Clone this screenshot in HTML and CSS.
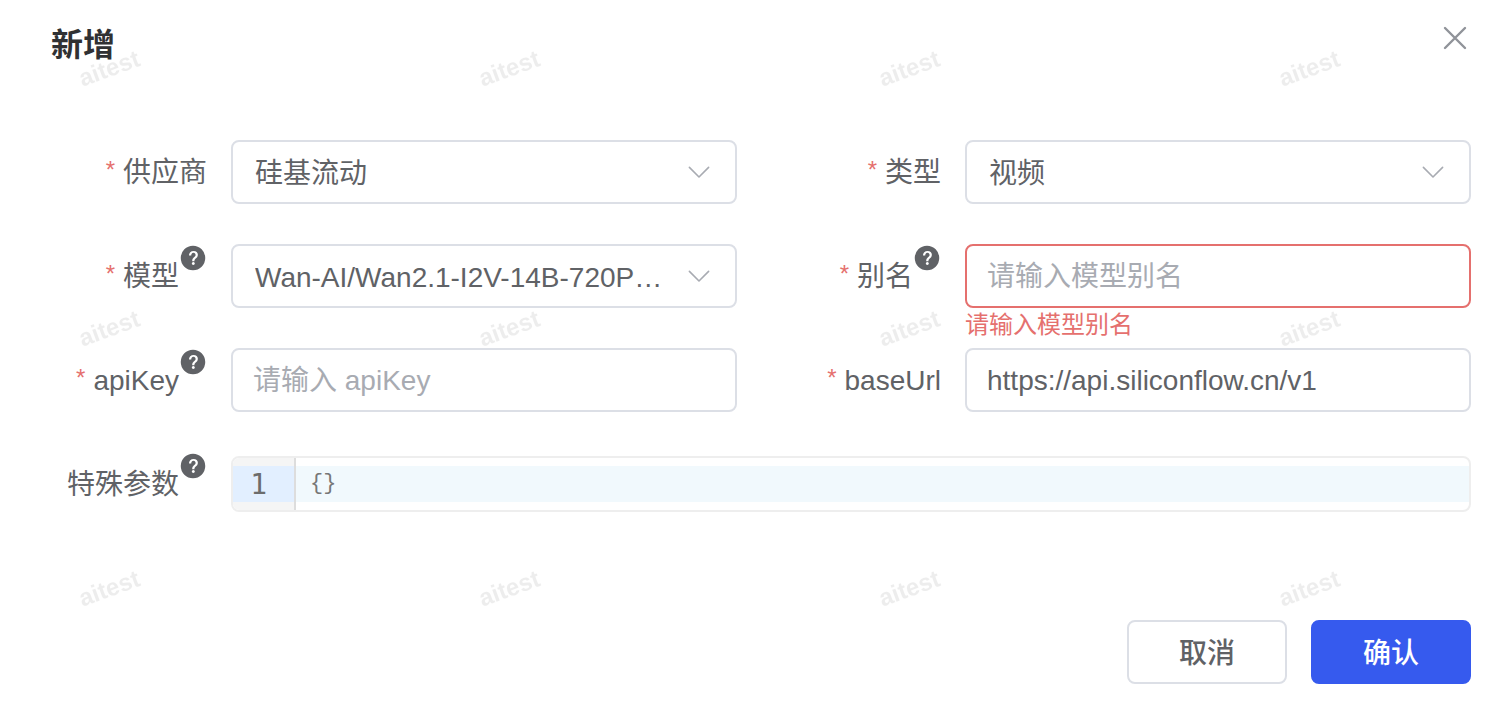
FILE: index.html
```html
<!DOCTYPE html>
<html lang="zh-CN">
<head>
    <meta charset="UTF-8">
    <meta name="viewport" content="width=device-width, initial-scale=1.0">
    <title>新增</title>
    <link rel="stylesheet" href="styles.css">
</head>
<body>
    <!-- shared icons -->
    <svg class="sprite" width="0" height="0" aria-hidden="true">
        <symbol id="icon-help" viewBox="0 0 1024 1024">
            <path fill="currentColor" d="M512 64a448 448 0 1 1 0 896 448 448 0 0 1 0-896m23.744 191.488c-52.096 0-92.928 14.784-123.2 44.352-30.976 29.568-45.76 70.4-45.76 122.496h80.256c0-29.568 5.632-52.8 17.6-68.992 13.376-19.712 35.2-28.864 66.176-28.864 23.936 0 42.944 6.336 56.32 19.712 12.672 13.376 19.712 31.68 19.712 54.912 0 17.6-6.336 34.496-19.008 49.984l-8.448 9.856c-45.76 40.832-73.216 70.4-82.368 89.408-9.856 19.008-14.08 42.24-14.08 68.992v9.856h80.96v-9.856c0-16.896 3.52-31.68 10.56-45.76 6.336-12.672 15.488-24.64 28.16-35.2 33.792-29.568 54.208-48.576 60.544-55.616 16.896-22.528 26.048-51.392 26.048-86.592q0-64.416-42.24-101.376c-28.16-25.344-65.472-37.312-111.232-37.312m-12.672 406.208a54.27 54.27 0 0 0-38.72 14.784 49.4 49.4 0 0 0-15.488 38.016c0 15.488 4.928 28.16 15.488 38.016A54.85 54.85 0 0 0 523.072 768c15.488 0 28.16-4.928 38.72-14.784a51.52 51.52 0 0 0 16.192-38.72 51.97 51.97 0 0 0-15.488-38.016 55.94 55.94 0 0 0-39.424-14.784"/>
        </symbol>
        <symbol id="icon-arrow" viewBox="0 0 28 28">
            <path fill="none" stroke="currentColor" stroke-width="1.6" stroke-linecap="round" stroke-linejoin="round" d="M4.4 9.4 14 19l9.6-9.6"/>
        </symbol>
    </svg>

    <div class="dialog">
        <header class="dialog-header">
            <h1 class="dialog-title">新增</h1>
            <button type="button" class="close-btn" aria-label="关闭">
                <svg width="32" height="32" viewBox="0 0 32 32" fill="none" stroke="currentColor" stroke-width="2.4" stroke-linecap="round">
                    <path d="M6 6l20 20M26 6L6 26"/>
                </svg>
            </button>
        </header>

        <form class="form" id="modelForm">
            <div class="form-item">
                <label class="form-label required" for="provider">供应商</label>
                <div class="form-content">
                    <div class="select-box">
                        <select class="control" id="provider">
                            <option>硅基流动</option>
                        </select>
                        <svg class="arrow"><use href="#icon-arrow"/></svg>
                    </div>
                </div>
            </div>
            <div class="form-item">
                <label class="form-label required" for="type">类型</label>
                <div class="form-content">
                    <div class="select-box">
                        <select class="control" id="type">
                            <option>视频</option>
                        </select>
                        <svg class="arrow"><use href="#icon-arrow"/></svg>
                    </div>
                </div>
            </div>

            <div class="form-item">
                <label class="form-label required" for="model">模型<svg class="help"><use href="#icon-help"/></svg></label>
                <div class="form-content">
                    <div class="select-box">
                        <select class="control" id="model">
                            <option>Wan-AI/Wan2.1-I2V-14B-720P-Turbo</option>
                        </select>
                        <svg class="arrow"><use href="#icon-arrow"/></svg>
                    </div>
                </div>
            </div>
            <div class="form-item">
                <label class="form-label required" for="alias">别名<svg class="help"><use href="#icon-help"/></svg></label>
                <div class="form-content">
                    <input class="control is-error" type="text" id="alias" placeholder="请输入模型别名" aria-describedby="aliasError">
                    <div class="error" id="aliasError">请输入模型别名</div>
                </div>
            </div>

            <div class="form-item">
                <label class="form-label required" for="apiKey">apiKey<svg class="help"><use href="#icon-help"/></svg></label>
                <div class="form-content">
                    <input class="control" type="text" id="apiKey" placeholder="请输入 apiKey">
                </div>
            </div>
            <div class="form-item">
                <label class="form-label required" for="baseUrl">baseUrl</label>
                <div class="form-content">
                    <input class="control" type="text" id="baseUrl" value="https://api.siliconflow.cn/v1">
                </div>
            </div>

            <div class="form-item full">
                <label class="form-label" for="params">特殊参数<svg class="help"><use href="#icon-help"/></svg></label>
                <div class="form-content">
                    <div class="editor">
                        <div class="gutter"><span class="line-number">1</span></div>
                        <textarea class="code" id="params" rows="1" spellcheck="false">{}</textarea>
                    </div>
                </div>
            </div>
        </form>

        <footer class="dialog-footer">
            <button type="button" class="btn">取消</button>
            <button type="submit" form="modelForm" class="btn btn-primary">确认</button>
        </footer>
    </div>

    <svg class="watermark" aria-hidden="true">
        <defs>
            <pattern id="mark" width="400" height="260" patternUnits="userSpaceOnUse">
                <text class="mark-text" transform="translate(112 76) rotate(-20)" text-anchor="middle">aitest</text>
            </pattern>
        </defs>
        <rect width="100%" height="100%" fill="url(#mark)"/>
    </svg>
</body>
</html>
```

FILE: styles.css
```css
* {
    box-sizing: border-box;
}
body {
    margin: 0;
    background: #fff;
    color: #606266;
    font-family: "Liberation Sans", "Noto Sans CJK SC", sans-serif;
    font-size: 28px;
}
input, select, button {
    font: inherit;
    color: inherit;
}
.sprite {
    display: none;
}
.dialog {
    padding: 20px 41px 38px 27px;
}
.dialog-header {
    display: flex;
    justify-content: space-between;
    align-items: flex-start;
    height: 120px;
    padding-left: 24px;
}
.dialog-title {
    margin: 0;
    color: #303133;
    font-size: 32px;
    font-weight: bold;
    line-height: 50px;
}
.close-btn {
    display: flex;
    padding: 2px 0;
    border: none;
    background: none;
    color: #909399;
    cursor: pointer;
}

/* form */
.form {
    display: grid;
    grid-template-columns: 1fr 1fr;
    column-gap: 24px;
}
.form-item {
    display: flex;
    gap: 24px;
    min-height: 104px;
}
.full {
    grid-column: 1 / -1;
}
.form-label {
    display: flex;
    justify-content: flex-end;
    flex: 0 0 180px;
    height: 64px;
    line-height: 66px;
    white-space: nowrap;
}
.required::before {
    content: "*";
    margin-right: 8px;
    color: #e5706e;
    font-size: 24px;
    line-height: 60px;
}
.help {
    width: 28px;
    height: 28px;
}
.form-content {
    flex: 1;
    min-width: 0;
}
.control {
    display: block;
    width: 100%;
    height: 64px;
    padding: 2px 20px 0;
    border: 2px solid #dcdfe6;
    border-radius: 8px;
    background: #fff;
    outline: none;
}
.control:focus {
    border-color: #365aee;
}
.control::placeholder {
    color: #a8abb2;
    opacity: 1;
}
.control.is-error {
    border-color: #e5706e;
}
.error {
    color: #e5706e;
    font-size: 24px;
    line-height: 34px;
}
.select-box {
    display: grid;
    align-items: center;
}
.select-box > * {
    grid-area: 1 / 1;
}
.select-box .control {
    padding: 2px 64px 0 22px;
    appearance: none;
    overflow: hidden;
    text-overflow: ellipsis;
    white-space: nowrap;
}
.arrow {
    justify-self: end;
    width: 28px;
    height: 28px;
    margin-right: 24px;
    color: #a8abb2;
    pointer-events: none;
}

/* code editor */
.editor {
    display: flex;
    margin-top: 4px;
    border: 2px solid #eee;
    border-radius: 8px;
    overflow: hidden;
}
.gutter {
    flex: 0 0 63px;
    padding: 8px 0;
    border-right: 2px solid #ddd;
    background: #f5f5f5;
}
.line-number {
    display: block;
    height: 36px;
    padding-right: 27px;
    background: #e2efff;
    color: #6c6c6c;
    font-family: "DejaVu Sans Mono", monospace;
    font-size: 28px;
    line-height: 38px;
    text-align: right;
}
.code {
    flex: 1;
    height: 36px;
    margin: 8px 0;
    padding: 0 14px;
    border: none;
    outline: none;
    background: #f1f9fd;
    color: #777;
    font-family: "Liberation Mono", monospace;
    font-size: 22px;
    line-height: 36px;
    resize: none;
    overflow: hidden;
}

/* footer */
.dialog-footer {
    display: flex;
    justify-content: flex-end;
    gap: 24px;
    padding-top: 64px;
}
.btn {
    width: 160px;
    height: 64px;
    padding: 0 0 2px;
    border: 2px solid #dcdfe6;
    border-radius: 8px;
    background: #fff;
    font-weight: 500;
    cursor: pointer;
}
.btn-primary {
    border-color: #365aee;
    background: #365aee;
    color: #fff;
}

/* watermark layer over the whole page */
.watermark {
    position: fixed;
    inset: 0;
    width: 100%;
    height: 100%;
    pointer-events: none;
}
.mark-text {
    fill: rgba(0, 0, 0, 0.07);
    font-size: 24px;
    font-weight: bold;
}
```
